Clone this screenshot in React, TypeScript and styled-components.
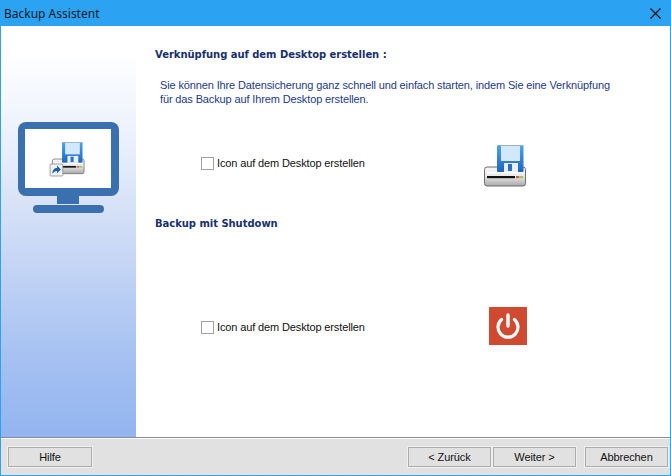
import React from "react";
import styled, { createGlobalStyle } from "styled-components";

const Global = createGlobalStyle`
  html, body { margin: 0; padding: 0; background: #fff; }
  * { box-sizing: border-box; }
`;

const Win = styled.div`
  width: 671px;
  height: 476px;
  background: #2ba3f2;
  padding: 0 1px 1px;
  display: flex;
  flex-direction: column;
  font-family: "Liberation Sans", Arial, sans-serif;
  overflow: hidden;
`;
const TitleBar = styled.div`
  height: 26px;
  flex: none;
  display: flex;
  align-items: center;
  justify-content: space-between;
  padding: 0 9px 0 3px;
`;
const TitleText = styled.span`
  font-family: "Noto Sans", "Open Sans", sans-serif;
  font-size: 12px;
  color: #0a1a28;
`;
const Main = styled.div`
  flex: 1;
  display: flex;
  min-height: 0;
  background: #fff;
`;
const Side = styled.aside`
  width: 135px;
  flex: none;
  display: flex;
  justify-content: center;
  padding: 96px 1px 0 0;
  background: linear-gradient(180deg, #fff 6%, #e8effb 30%, #cfdcf6 50%, #a9c3f2 78%, #92b4f0 100%);
`;
const Content = styled.div`
  flex: 1;
  padding: 22px 0 0 19px;
`;
const Heading = styled.h2<{ $top?: number }>`
  margin: ${(p) => p.$top ?? 0}px 0 0;
  font-family: "DejaVu Sans", Verdana, sans-serif;
  font-weight: bold;
  font-size: 10px;
  letter-spacing: -0.04px;
  line-height: 14px;
  color: #17306f;
`;
const Desc = styled.p`
  margin: 16px 0 0 5px;
  width: 455px;
  font-size: 11px;
  letter-spacing: -0.13px;
  line-height: 14px;
  color: #1d3a86;
`;
const OptionRow = styled.div<{ $top: number; $iconCol: number }>`
  display: grid;
  grid-template-columns: ${(p) => p.$iconCol}px auto;
  align-items: center;
  justify-content: start;
  margin-top: ${(p) => p.$top}px;
  padding-left: 46px;
`;
const CheckLabel = styled.label<{ $shift: number }>`
  display: flex;
  align-items: center;
  gap: 3px;
  font-size: 11px;
  letter-spacing: -0.13px;
  color: #111;
  transform: translateY(${(p) => p.$shift}px);
`;
const CheckBox = styled.span`
  width: 13px;
  height: 13px;
  background: #fff;
  border: 1px solid #a0a0a0;
`;
const Footer = styled.footer`
  flex: none;
  height: 38px;
  background: #e1e1e1;
  border-top: 1px solid #8a8a8a;
  box-shadow: inset 0 1px 0 #fff;
  display: flex;
  align-items: center;
  padding: 1px 2px 0 7px;
  gap: 2px;
`;
const Btn = styled.button<{ $wide?: number; $gapLeft?: number; $auto?: boolean }>`
  width: ${(p) => p.$wide ?? 83}px;
  height: 20px;
  padding: 0;
  margin-left: ${(p) => (p.$auto ? "auto" : p.$gapLeft ? `${p.$gapLeft}px` : "0")};
  background: #e1e1e1;
  border: 1px solid #adadad;
  outline: 1px solid #f0f0f0;
  outline-offset: 0;
  font-family: "Liberation Sans", Arial, sans-serif;
  font-size: 11px;
  letter-spacing: -0.1px;
  color: #111;
`;

const CloseIcon = () => (
  <svg width="11" height="11" viewBox="0 0 11 11" aria-hidden="true">
    <path d="M0.5 0.5 L10.5 10.5 M10.5 0.5 L0.5 10.5" stroke="#0a0a0a" strokeWidth="1.1" fill="none" />
  </svg>
);

const BackupIcon = ({ size, shortcut }: { size: number; shortcut?: boolean }) => (
  <svg width={size} height={size} viewBox="0 0 44 44" overflow="visible" aria-hidden="true">
    <defs>
      <linearGradient id={`fl${size}`} x1="0" y1="0" x2="0" y2="1">
        <stop offset="0" stopColor="#4aa6ee" />
        <stop offset="1" stopColor="#1f63c4" />
      </linearGradient>
      <linearGradient id={`pr${size}`} x1="0" y1="0" x2="0" y2="1">
        <stop offset="0" stopColor="#f6f6f6" />
        <stop offset="0.5" stopColor="#e8e8e8" />
        <stop offset="1" stopColor="#a8a8a8" />
      </linearGradient>
    </defs>
    <rect x="0.5" y="22" width="41" height="19" rx="2.5" fill={`url(#pr${size})`} stroke="#6f6f6f" />
    <rect x="13" y="0" width="26.5" height="27" rx="1" fill={`url(#fl${size})`} />
    <rect x="13" y="0" width="26.5" height="1" fill="#9fb2c4" />
    <rect x="17" y="1" width="19" height="15" fill="#d4e8fb" />
    <rect x="20" y="18" width="14" height="9" fill="#e8eff8" />
    <rect x="24" y="19" width="4" height="7" fill="#2a6fc8" />
    <rect x="3" y="27" width="36" height="1.5" fill="#fff" opacity="0.8" />
    <rect x="3" y="31" width="28" height="2.2" fill="#111" />
    <rect x="32" y="31" width="3.4" height="2.2" fill="#e0564c" />
    <rect x="36" y="31" width="3.2" height="2.2" fill="#8ed05a" />
    {shortcut && (
      <g>
        <rect x="-2.5" y="28.5" width="16.5" height="15.5" rx="1" fill="#f2f2f2" stroke="#8a8a8a" />
        <path d="M0.5 41 C0.5 36 3 33.5 6.5 33.5 L6.5 30.5 L11.5 35.5 L6.5 40.5 L6.5 37.5 C4 37.5 2.5 38.5 0.5 41 Z" fill="#1c5fb4" />
      </g>
    )}
  </svg>
);

const PowerIcon = () => (
  <svg width="38" height="38" viewBox="0 0 38 38" aria-hidden="true">
    <rect width="38" height="38" fill="#cf4a30" />
    <path d="M12.6 12.5 A10 10 0 1 0 25.4 12.5" fill="none" stroke="#fff" strokeWidth="3.2" strokeLinecap="round" />
    <path d="M19 8 V19" stroke="#fff" strokeWidth="3.4" strokeLinecap="round" />
  </svg>
);

const Monitor = () => (
  <svg width="101" height="91" viewBox="0 0 101 91" aria-hidden="true">
    <rect x="0" y="0" width="101" height="74" rx="8" fill="#3a70ae" />
    <rect x="7" y="7" width="86" height="59" fill="#fff" />
    <rect x="39" y="74" width="22" height="8" fill="#3a70ae" />
    <rect x="15" y="83" width="71" height="8" rx="4" fill="#3a70ae" />
    <g transform="translate(34 20)">
      <BackupIcon size={34} shortcut />
    </g>
  </svg>
);

export default function App() {
  return (
    <Win>
      <Global />
      <TitleBar>
        <TitleText>Backup Assistent</TitleText>
        <CloseIcon />
      </TitleBar>
      <Main>
        <Side>
          <Monitor />
        </Side>
        <Content>
          <Heading>Verknüpfung auf dem Desktop erstellen :</Heading>
          <Desc>
            Sie können Ihre Datensicherung ganz schnell und einfach starten, indem Sie eine Verknüpfung für das Backup auf Ihrem Desktop erstellen.
          </Desc>
          <OptionRow $top={39} $iconCol={283}>
            <CheckLabel $shift={-4}>
              <CheckBox />
              Icon auf dem Desktop erstellen
            </CheckLabel>
            <BackupIcon size={44} />
          </OptionRow>
          <Heading $top={28}>Backup mit Shutdown</Heading>
          <OptionRow $top={76} $iconCol={288}>
            <CheckLabel $shift={1}>
              <CheckBox />
              Icon auf dem Desktop erstellen
            </CheckLabel>
            <PowerIcon />
          </OptionRow>
        </Content>
      </Main>
      <Footer>
        <Btn $wide={84}>Hilfe</Btn>
        <Btn $auto>&lt; Zurück</Btn>
        <Btn>Weiter &gt;</Btn>
        <Btn $gapLeft={7}>Abbrechen</Btn>
      </Footer>
    </Win>
  );
}
